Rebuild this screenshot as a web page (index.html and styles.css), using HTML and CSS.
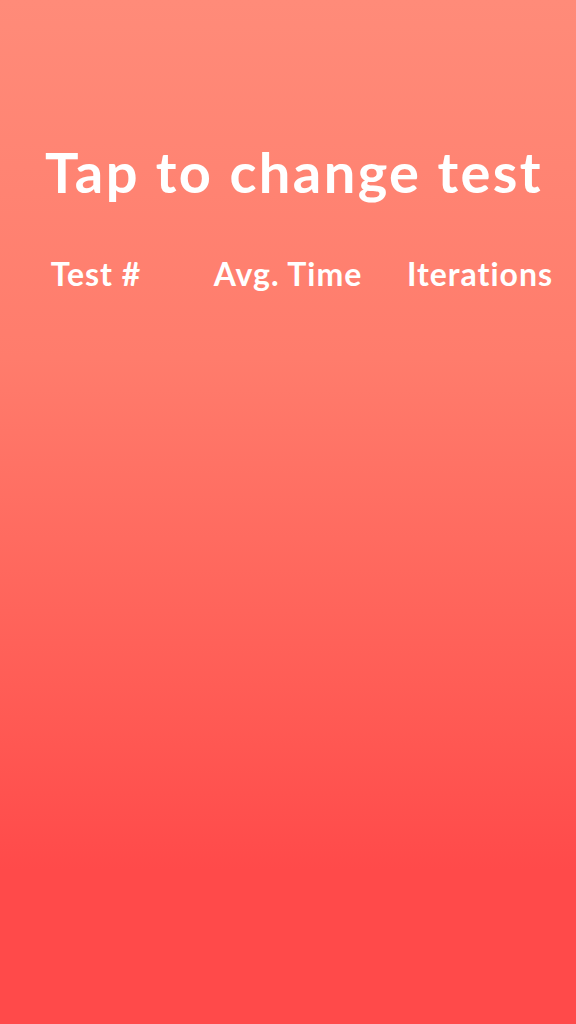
FILE: index.html
```html
<!DOCTYPE html>
<html>
<head>
<meta charset="utf-8">
<link rel="stylesheet" href="styles.css">
</head>
<body>
<main class="screen">
  <h1 class="title">Tap to change test</h1>
  <div class="header-row">
    <div class="col">Test #</div>
    <div class="col">Avg. Time</div>
    <div class="col">Iterations</div>
  </div>
</main>
</body>
</html>
```
FILE: styles.css
```css
html, body {
  margin: 0;
  padding: 0;
}
.screen {
  width: 576px;
  height: 1024px;
  box-sizing: border-box;
  background: linear-gradient(180deg, #ff8b79 0%, #ff7c6c 35%, #ff5a54 70%, #ff4a4a 85%, #ff4a4a 100%);
  font-family: "Lato", "Open Sans", sans-serif;
  color: #ffffff;
  padding-top: 132px;
  display: flex;
  flex-direction: column;
}
.title {
  margin: 0;
  font-size: 56px;
  font-weight: 700;
  line-height: 80px;
  text-align: center;
  letter-spacing: 2.4px;
  padding-left: 12px;
}
.header-row {
  display: grid;
  grid-template-columns: repeat(3, 1fr);
  margin-top: 42px;
}
.col {
  text-align: center;
  font-size: 32px;
  font-weight: 700;
  line-height: 40px;
  letter-spacing: 1px;
}
```
